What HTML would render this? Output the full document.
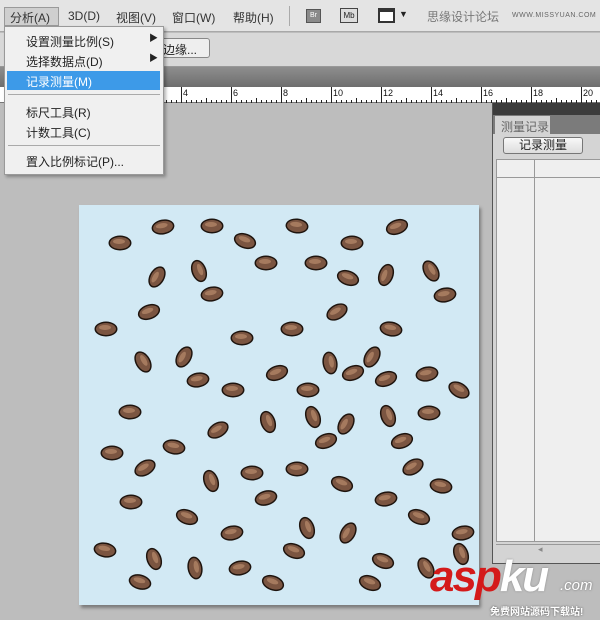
<!DOCTYPE html>
<html><head><meta charset="utf-8"><style>
*{margin:0;padding:0;box-sizing:border-box}
body{width:600px;height:620px;overflow:hidden;background:#bdbdbd;font-family:"Liberation Sans","Noto Sans CJK SC",sans-serif;position:relative;font-size:12px;color:#222}
.abs{position:absolute}
#menubar{left:0;top:0;width:600px;height:32px;background:#e4e4e4;border-bottom:1px solid #a8a8a8}
.mi{position:absolute;top:9px;font-size:12px;color:#333}
#opts{left:0;top:33px;width:600px;height:34px;background:#d8d8d8;border-bottom:1px solid #999}
#strip{left:0;top:67px;width:600px;height:20px;background:linear-gradient(#8e8e8e,#6e6e6e)}
#ruler{left:0;top:87px;width:600px;height:16px;background:#fff;border-bottom:1px solid #777}
#doc{left:79px;top:205px;width:400px;height:400px;background:#d2e9f4;box-shadow:2px 3px 3px rgba(0,0,0,.35)}
#menu{left:4px;top:26px;width:160px;height:149px;background:#f0f0f0;border:1px solid #999;box-shadow:2px 2px 3px rgba(0,0,0,.3)}
.it{position:absolute;left:21px;font-size:12px;color:#222}
#panel{left:492px;top:103px;width:108px;height:461px;background:#d4d4d4;border-left:1px solid #555;border-bottom:1px solid #555}
</style></head><body>
<div id="menubar" class="abs">
 <div class="abs" style="left:4px;top:7px;width:55px;height:19px;background:#cfcfcf;border:1px solid #9a9a9a"></div>
 <span class="mi" style="left:10px">分析(A)</span>
 <span class="mi" style="left:68px">3D(D)</span>
 <span class="mi" style="left:116px">视图(V)</span>
 <span class="mi" style="left:172px">窗口(W)</span>
 <span class="mi" style="left:233px">帮助(H)</span>
 <div class="abs" style="left:289px;top:6px;width:1px;height:20px;background:#aaa"></div>
 <div class="abs" style="left:306px;top:9px;width:15px;height:14px;background:#8a8a8a;border:1px solid #555;font-size:7px;color:#fff;text-align:center;line-height:12px">Br</div>
 <div class="abs" style="left:340px;top:8px;width:18px;height:15px;background:#ddd;border:1px solid #444;font-size:8px;text-align:center;line-height:13px">Mb</div>
 <div class="abs" style="left:378px;top:8px;width:17px;height:15px;background:#fff;border:2px solid #333;border-top-width:4px"></div>
 <span class="abs" style="left:399px;top:9px;font-size:9px">▼</span>
 <span class="abs" style="left:427px;top:8px;font-size:12px;color:#777">思缘设计论坛</span>
 <span class="abs" style="left:512px;top:12px;font-size:7px;color:#666;letter-spacing:.5px">WWW.MISSYUAN.COM</span>
</div>
<div id="opts" class="abs">
 <div class="abs" style="left:150px;top:5px;width:60px;height:20px;background:#eee;border:1px solid #888;border-radius:3px;font-size:12px;padding:2px 0 0 12px">边缘...</div>
</div>
<div id="strip" class="abs"></div>
<div id="ruler" class="abs">
<svg width="600" height="16" class="abs" style="left:0;top:0">
<g stroke="#222" stroke-width="1">
<path d="M181.5 0V16M231.5 0V16M281.5 0V16M331.5 0V16M381.5 0V16M431.5 0V16M481.5 0V16M531.5 0V16M581.5 0V16"/>
<path id="t" d="M166.5 13V16M171.5 13V16M176.5 13V16M186.5 13V16M191.5 13V16M196.5 13V16M201.5 13V16M206.5 11V16M211.5 13V16M216.5 13V16M221.5 13V16M226.5 13V16"/>
<use href="#t" x="50"/><use href="#t" x="100"/><use href="#t" x="150"/><use href="#t" x="200"/><use href="#t" x="250"/><use href="#t" x="300"/><use href="#t" x="350"/><use href="#t" x="400"/>
</g>
<g font-size="9" font-family="Liberation Sans" fill="#111">
<text x="183" y="9">4</text><text x="233" y="9">6</text><text x="283" y="9">8</text><text x="333" y="9">10</text><text x="383" y="9">12</text><text x="433" y="9">14</text><text x="483" y="9">16</text><text x="533" y="9">18</text><text x="583" y="9">20</text>
</g></svg>
</div>
<div id="doc" class="abs">
<svg width="400" height="400" id="seeds"></svg>
</div>
<div id="panel" class="abs">
 <div class="abs" style="left:0;top:0;width:108px;height:12px;background:#3c3c3c"></div>
 <div class="abs" style="left:0;top:12px;width:108px;height:19px;background:#7b7b7b"></div>
 <div class="abs" style="left:2px;top:13px;width:55px;height:19px;background:#d4d4d4;font-size:12px;color:#666;padding:2px 0 0 6px">测量记录</div>
 <div class="abs" style="left:10px;top:34px;width:80px;height:17px;background:linear-gradient(#f8f8f8,#ddd);border:1px solid #777;border-radius:3px;font-size:12px;text-align:center;line-height:15px">记录测量</div>
 <div class="abs" style="left:3px;top:56px;width:105px;height:383px;background:#efefef;border:1px solid #999"></div>
 <div class="abs" style="left:41px;top:56px;width:1px;height:383px;background:#999"></div>
 <div class="abs" style="left:3px;top:74px;width:105px;height:1px;background:#999"></div>
 <div class="abs" style="left:3px;top:441px;width:105px;height:1px;background:#999"></div>
 <span class="abs" style="left:45px;top:441px;font-size:9px;color:#888">◂</span>
</div>
<div id="menu" class="abs">
 <span class="it" style="top:6px">设置测量比例(S)</span><span class="abs" style="left:144px;top:4px;font-size:9px">▶</span>
 <span class="it" style="top:26px">选择数据点(D)</span><span class="abs" style="left:144px;top:24px;font-size:9px">▶</span>
 <div class="abs" style="left:2px;top:44px;width:153px;height:19px;background:#3d9ae8"></div>
 <span class="it" style="top:46px;color:#fff">记录测量(M)</span>
 <div class="abs" style="left:3px;top:67px;width:152px;height:1px;background:#aaa"></div>
 <span class="it" style="top:77px">标尺工具(R)</span>
 <span class="it" style="top:97px">计数工具(C)</span>
 <div class="abs" style="left:3px;top:118px;width:152px;height:1px;background:#aaa"></div>
 <span class="it" style="top:126px">置入比例标记(P)...</span>
</div>
<div class="abs" style="left:430px;top:555px;font-family:'Liberation Sans',sans-serif;font-style:italic;font-weight:bold;font-size:44px;color:#d41a1a;letter-spacing:-2px;line-height:44px">asp<span style="color:#fff;text-shadow:0 0 2px #888">ku</span></div>
<div class="abs" style="left:560px;top:577px;font-size:15px;font-style:italic;color:#fff;text-shadow:0 0 2px #666">.com</div>
<div class="abs" style="left:490px;top:603px;font-size:10px;color:#fff;font-weight:bold;text-shadow:0 0 2px #555">免费网站源码下载站!</div>
<script>
var p=[[120,243,0],[163,227,-10],[212,226,0],[245,241,20],[297,226,5],[352,243,0],[397,227,-20],[157,277,-60],[199,271,70],[266,263,0],[316,263,0],[348,278,20],[386,275,-70],[431,271,60],[212,294,-10],[445,295,-10],[149,312,-20],[337,312,-30],[106,329,0],[242,338,0],[292,329,0],[391,329,10],[143,362,60],[184,357,-60],[330,363,80],[372,357,-60],[198,380,-10],[233,390,0],[277,373,-20],[353,373,-20],[386,379,-20],[427,374,-10],[459,390,30],[308,390,0],[130,412,0],[268,422,70],[313,417,70],[346,424,-60],[388,416,70],[429,413,0],[218,430,-30],[326,441,-20],[402,441,-20],[112,453,0],[174,447,10],[145,468,-30],[211,481,70],[252,473,0],[297,469,0],[342,484,20],[413,467,-30],[441,486,10],[131,502,0],[266,498,-15],[386,499,-10],[187,517,20],[419,517,20],[232,533,-10],[307,528,70],[348,533,-60],[463,533,-10],[105,550,10],[154,559,70],[195,568,80],[240,568,-10],[294,551,20],[383,561,20],[426,568,60],[140,582,15],[273,583,20],[370,583,20],[461,554,70]];
var s='';p.forEach(function(a){var x=a[0]-79,y=a[1]-205;s+='<g transform="translate('+x+','+y+') rotate('+a[2]+')"><ellipse rx="11.5" ry="7.5" fill="#1e140e"/><ellipse rx="10" ry="6" fill="#7b5541"/><ellipse cx="-1" cy="-1.5" rx="6" ry="2.5" fill="#a57a5e"/></g>';});
document.getElementById('seeds').innerHTML=s;
</script>
</body></html>
